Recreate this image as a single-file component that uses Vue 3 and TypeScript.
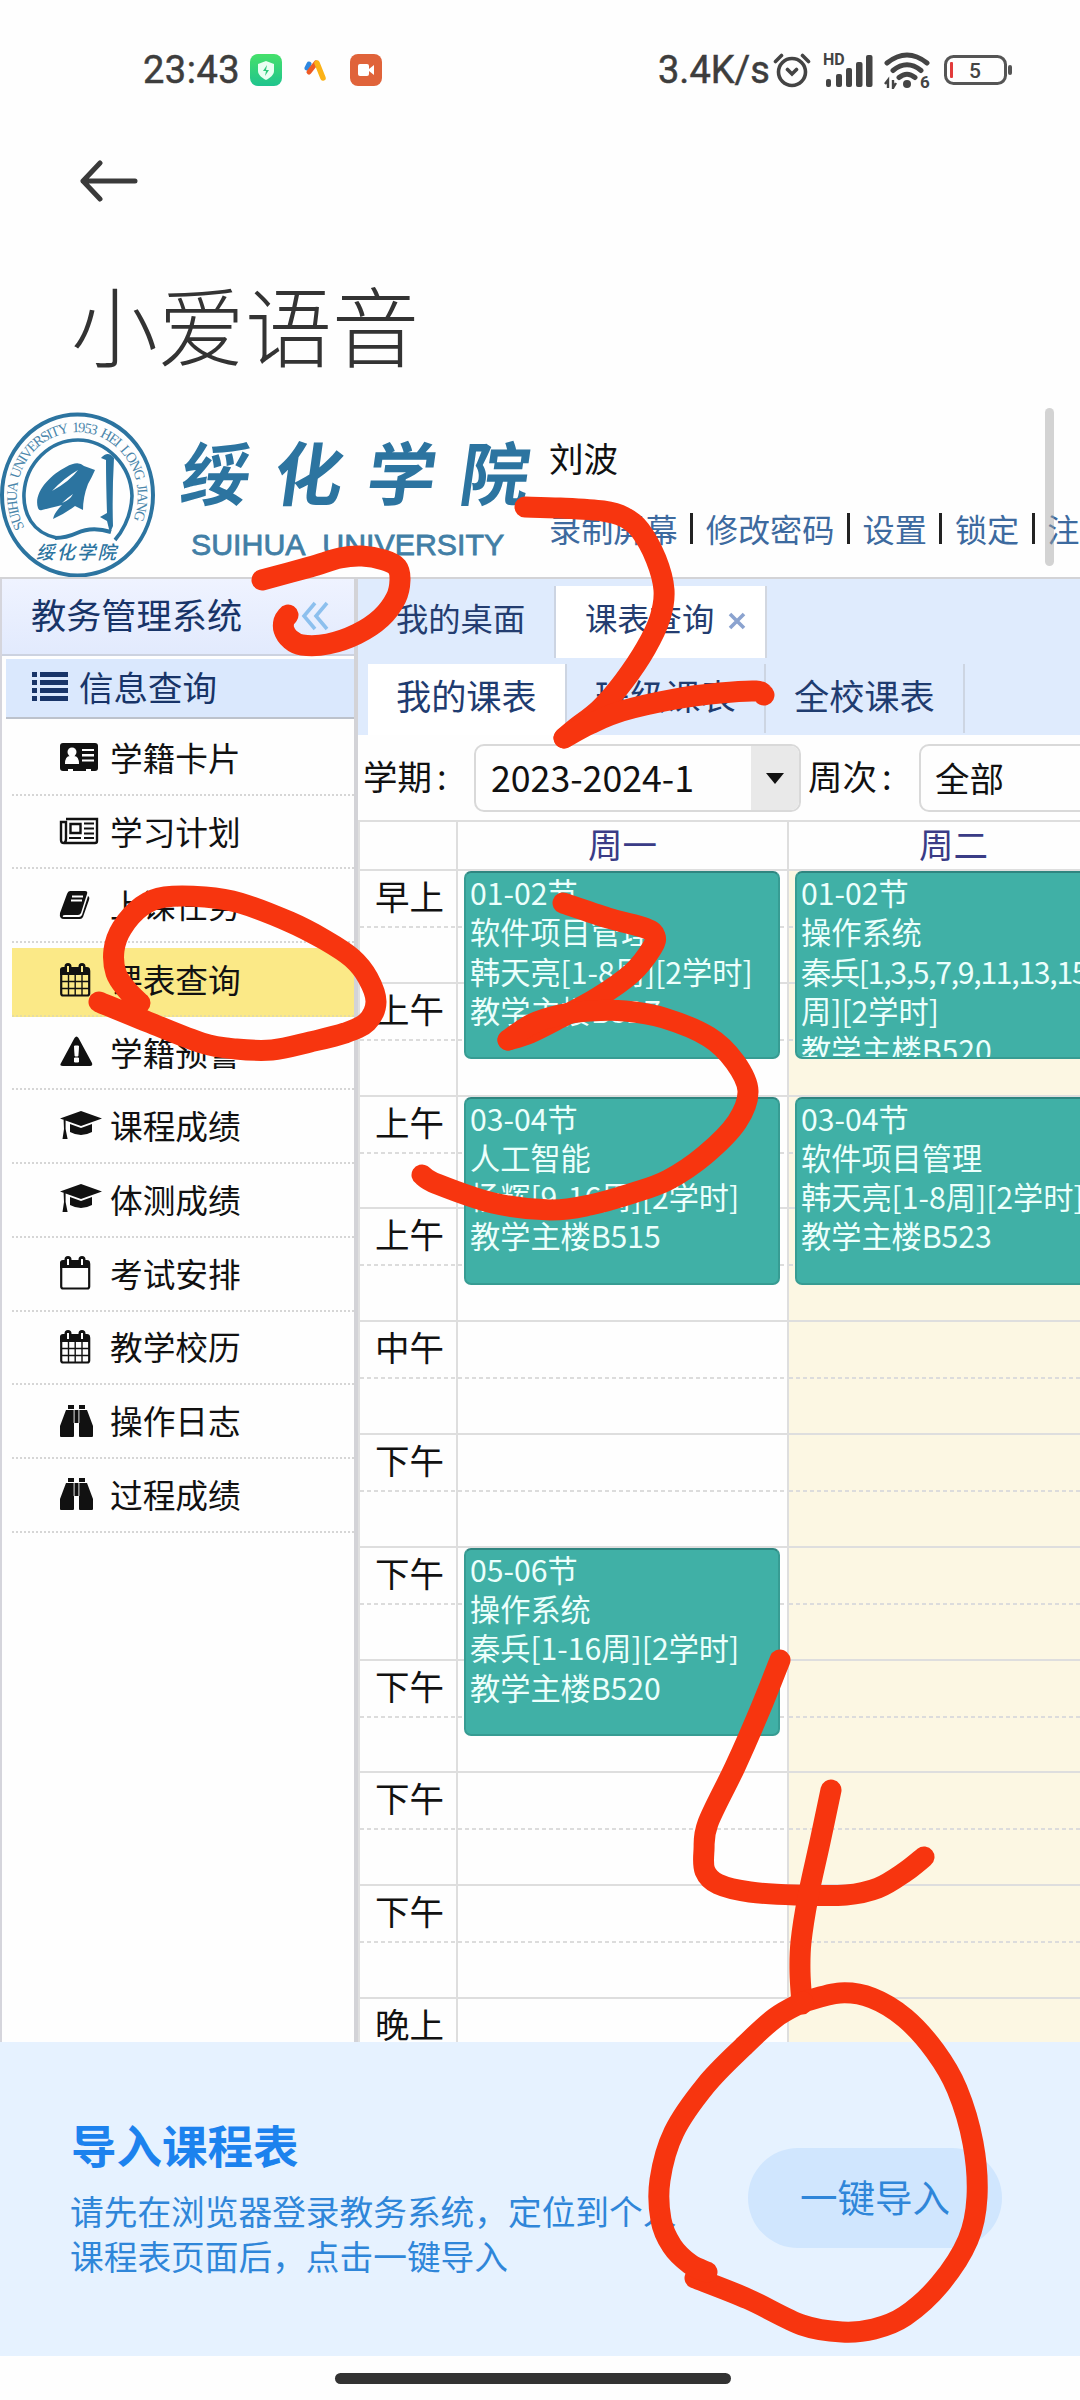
<script setup lang="ts">
interface MenuItem { icon: string; label: string; active?: boolean }
interface Lesson { col: number; row: number; lines: string[]; tight?: number }
type Pt = [number, number]

const menu: MenuItem[] = [
  { icon: 'card', label: '学籍卡片' },
  { icon: 'news', label: '学习计划' },
  { icon: 'book', label: '上课任务' },
  { icon: 'calendar', label: '课表查询', active: true },
  { icon: 'warn', label: '学籍预警' },
  { icon: 'cap', label: '课程成绩' },
  { icon: 'cap', label: '体测成绩' },
  { icon: 'calendar-o', label: '考试安排' },
  { icon: 'calendar', label: '教学校历' },
  { icon: 'bino', label: '操作日志' },
  { icon: 'bino', label: '过程成绩' },
]
const links = ['录制屏幕', '修改密码', '设置', '锁定', '注']
const slots = ['早上', '上午', '上午', '上午', '中午', '下午', '下午', '下午', '下午', '下午', '晚上']
const lessons: Lesson[] = [
  { col: 2, row: 2, lines: ['01-02节', '软件项目管理', '韩天亮[1-8周][2学时]', '教学主楼B527'] },
  { col: 2, row: 4, lines: ['03-04节', '人工智能', '杨辉[9-16周][2学时]', '教学主楼B515'] },
  { col: 2, row: 8, lines: ['05-06节', '操作系统', '秦兵[1-16周][2学时]', '教学主楼B520'] },
  { col: 3, row: 2, lines: ['01-02节', '操作系统', '秦兵[1,3,5,7,9,11,13,15', '周][2学时]', '教学主楼B520'], tight: 2 },
  { col: 3, row: 4, lines: ['03-04节', '软件项目管理', '韩天亮[1-8周][2学时]', '教学主楼B523'] },
]

// Freehand marker strokes, smoothed with a Catmull-Rom spline
const strokes: Pt[][] = [
  [[262, 580], [310, 567], [340, 558], [362, 556], [384, 560], [397, 567], [400, 580], [396, 598], [381, 618], [357, 634], [328, 644], [302, 645], [290, 639], [284, 630], [284, 621], [288, 615]],
  [[525, 507], [560, 508], [603, 511], [624, 517], [640, 530], [656, 559], [664, 590], [660, 618], [646, 648], [624, 681], [600, 709], [576, 728], [564, 738]],
  [[564, 738], [590, 724], [622, 711], [675, 699], [720, 693], [756, 691], [764, 695]],
  [[563, 903], [608, 918], [645, 928], [655, 936], [652, 948], [632, 973], [597, 998], [560, 1018], [530, 1033], [508, 1040]],
  [[508, 1040], [532, 1024], [560, 1015], [590, 1011], [625, 1011], [664, 1018], [709, 1037], [735, 1062], [748, 1091], [737, 1122], [705, 1155], [668, 1180], [633, 1193], [590, 1205], [550, 1210], [493, 1203], [437, 1184], [422, 1175]],
  [[99, 1002], [148, 1022], [202, 1043], [236, 1049], [272, 1050], [310, 1042], [345, 1033], [367, 1022], [376, 1002], [368, 978], [352, 958], [325, 940], [290, 922], [240, 903], [205, 897], [165, 897], [142, 906], [122, 928], [114, 950], [116, 973], [127, 990], [140, 1003]],
  [[780, 1660], [760, 1710], [735, 1767], [708, 1823], [704, 1850], [705, 1871], [718, 1884], [750, 1892], [795, 1895], [846, 1895], [878, 1888], [905, 1872], [924, 1857]],
  [[831, 1790], [820, 1842], [808, 1897], [801, 1942], [800, 1972], [802, 2004]],
  [[803, 2002], [840, 1993], [872, 1998], [905, 2018], [935, 2051], [957, 2089], [973, 2143], [977, 2197], [968, 2240], [940, 2284], [905, 2316], [874, 2329], [842, 2332], [802, 2325], [748, 2299], [695, 2278]],
  [[803, 2002], [775, 2018], [743, 2047], [706, 2085], [674, 2132], [660, 2180], [661, 2220], [672, 2246], [690, 2264], [707, 2272]],
]

function smooth(p: Pt[]): string {
  let d = `M${p[0][0]} ${p[0][1]}`
  for (let i = 0; i < p.length - 1; i++) {
    const a = p[Math.max(i - 1, 0)]
    const b = p[i]
    const c = p[i + 1]
    const e = p[Math.min(i + 2, p.length - 1)]
    d += `C${b[0] + (c[0] - a[0]) / 6} ${b[1] + (c[1] - a[1]) / 6} ${c[0] - (e[0] - b[0]) / 6} ${c[1] - (e[1] - b[1]) / 6} ${c[0]} ${c[1]}`
  }
  return d
}
</script>

<template>
  <div class="screen">
    <header class="status">
      <div class="status-left">
        <span class="clock">23:43</span>
        <svg class="app-ic" viewBox="0 0 32 32">
          <defs><linearGradient id="gr" x1="0" y1="0" x2="0" y2="1"><stop offset="0" stop-color="#45e06a" /><stop offset="1" stop-color="#1fc48e" /></linearGradient></defs>
          <rect width="32" height="32" rx="8" fill="url(#gr)" />
          <path d="M16 7l8 3v7c0 4-4 7-8 9-4-2-8-5-8-9v-7z" fill="#e9fff2" />
          <path d="M17 11l-4 6h3l-1 5 4-6h-3z" fill="#2fc97c" />
        </svg>
        <svg class="app-ic" viewBox="0 0 32 32">
          <path d="M7 14l2-4" stroke="#2d87e0" stroke-width="5" stroke-linecap="round" />
          <path d="M9 18L16 9" stroke="#ee5a24" stroke-width="5" stroke-linecap="round" />
          <path d="M17 9l6 15" stroke="#fbb217" stroke-width="5.500" stroke-linecap="round" />
        </svg>
        <svg class="app-ic" viewBox="0 0 32 32">
          <rect width="32" height="32" rx="8" fill="#e0633a" />
          <rect x="8" y="10" width="11" height="12" rx="2" fill="#fff" /><path d="M19 15l5-4v10l-5-4z" fill="#fff" />
        </svg>
      </div>
      <div class="status-right">
        <span class="speed">3.4K/s</span>
        <svg width="38" height="38" viewBox="0 0 38 38" fill="none" stroke="#444" stroke-width="3.600" stroke-linecap="round">
          <circle cx="19" cy="21" r="13.500" /><path d="M14.500 18.500L19 23l4.500-4.500M2.500 10.500l6-6M35.500 10.500l-6-6" />
        </svg>
        <svg width="50" height="38" viewBox="0 0 50 38" fill="#444">
          <text x="0" y="14" font-size="16" font-weight="700" font-family="Roboto, sans-serif">HD</text>
          <rect x="3" y="28" width="5" height="8" rx="2" /><rect x="13" y="23" width="6" height="13" rx="2" /><rect x="23" y="17" width="6" height="19" rx="2" /><rect x="33" y="11" width="6.500" height="25" rx="2" /><rect x="43" y="4" width="6.500" height="32" rx="2" />
        </svg>
        <svg class="wifi" width="48" height="38" viewBox="0 0 48 38">
          <g fill="none" stroke="#444" stroke-width="5" stroke-linecap="round"><path d="M3 12Q23-4 43 12M9 19.500Q23 8 37 19.500M15 26.500Q23 20 31 26.500" /></g>
          <circle cx="23" cy="33" r="4" fill="#444" />
          <path d="M4 37v-8l-3 4M9 29v8l3-5" fill="none" stroke="#444" stroke-width="2.400" />
          <text x="36" y="37" font-size="17" font-weight="700" fill="#444" font-family="Roboto, sans-serif">6</text>
        </svg>
        <svg width="70" height="32" viewBox="0 0 70 32">
          <rect x="1.500" y="2.500" width="60" height="27" rx="8" fill="none" stroke="#555" stroke-width="3" />
          <rect x="6" y="8" width="3" height="16" rx="1" fill="#e23b3b" /><rect x="64" y="11" width="4" height="10" rx="2" fill="#555" />
          <text x="25" y="23.500" font-size="21" font-weight="500" fill="#444" font-family="Roboto, sans-serif">5</text>
        </svg>
      </div>
    </header>

    <div class="nav">
      <svg width="58" height="42" viewBox="0 0 58 42" fill="none" stroke="#3a3a3a" stroke-width="5" stroke-linecap="round" stroke-linejoin="round"><path d="M20 3L3 21l17 18M3 21h52" /></svg>
    </div>
    <h1 class="title">小爱语音</h1>

    <section class="web">
      <div class="banner">
        <svg class="seal" viewBox="0 0 156 168">
          <defs><path id="ring" d="M24.500 118.500A60.500 64 0 1 1 133 112" /></defs>
          <g fill="none" stroke="#2c74a0"><ellipse cx="77.500" cy="86" rx="75.500" ry="80.500" stroke-width="4" /><path d="M57 129C32 124 23 104 24 84C26 54 50 31 78 31S131 56 132 87Q131 112 115 131" stroke-width="3.600" /></g>
          <text class="ring-text"><textPath href="#ring" textLength="252" lengthAdjust="spacing">SUIHUA UNIVERSITY 1953 HEI LONG JIANG</textPath></text>
          <path d="M38 99C33 84 50 66 66 58Q78 51 84 57L95 61Q92 68 88 75Q83 88 83 101L75 97Q66 104 53 110Q54 104 62 96Q50 99 42 101Q39 102 38 99Z" fill="#2c74a0" />
          <path d="M52 82Q64 69 78 61Q70 72 52 82ZM62 94Q67 89 73 85Q70 91 62 94Z" fill="#fff" />
          <path d="M101 49Q108 41 114 49Q112 85 113 117L110 124L107 112L100 108L107 104Q106 75 106 51Z" fill="#2c74a0" />
          <path d="M55 129Q66 129 77 124Q92 117 111 123" fill="none" stroke="#2c74a0" stroke-width="4" />
          <text x="36" y="150" class="seal-name">绥化学院</text>
        </svg>
        <div class="brand">
          <div class="brand-cn"><span>绥</span><span>化</span><span>学</span><span>院</span></div>
          <div class="brand-en">SUIHUA&nbsp; UNIVERSITY</div>
        </div>
        <div class="account">
          <div class="user">刘波</div>
          <nav class="links">
            <template v-for="(l, i) in links" :key="l"><i v-if="i" class="bar"></i><a>{{ l }}</a></template>
          </nav>
        </div>
        <i class="scrollbar"></i>
      </div>

      <div class="body">
        <aside class="side">
          <div class="side-head">
            <span>教务管理系统</span>
            <svg width="28" height="30" viewBox="0 0 28 30" fill="none" stroke="#8dc0ee" stroke-width="3.600"><path d="M14 2L3 15l11 13M26 2L15 15l11 13" /></svg>
          </div>
          <div class="side-group">
            <svg width="36" height="30" viewBox="0 0 36 30" fill="#183468"><path d="M0 1h5v5H0zM0 9h5v5H0zM0 17h5v5H0zM0 25h5v5H0zM8 1h28v5H8zM8 9h28v5H8zM8 17h28v5H8zM8 25h28v5H8z" /></svg>
            <span>信息查询</span>
          </div>
          <div v-for="m in menu" :key="m.label" class="item" :class="{ active: m.active }">
            <svg class="mi" viewBox="0 0 42 34">
              <g v-if="m.icon === 'card'"><rect x="0" y="3" width="38" height="28" rx="3" /><g fill="#fff"><circle cx="12" cy="12" r="4.500" /><path d="M5 24q0-8 5-8h4q5 0 5 8zM22 9h12v2H22zM22 14h12v2.500H22zM22 19.500h12v2H22zM8 29h5v2H8zM26 29h5v2h-5z" /></g></g>
              <g v-else-if="m.icon === 'news'" fill="none" stroke="#111" stroke-width="2.400"><path d="M6 5h31v22q0 2-2 2H4q-3 0-3-3V8h5v17q0 3-2 4" /><path d="M10.500 10h10v9h-10z" /><path d="M9 24h12M24 9.500h10M24 14.500h10M24 19.500h10M24 24h10" stroke-width="2" /></g>
              <g v-else-if="m.icon === 'book'"><path d="M10 3h15q3 0 2 3l-6 19q-1 2-3 2H5q-3 0-2 2h16q2 0 3-2l6-19q2 1 1 4l-6 17q-1 2-3 2H4q-5 0-4-6L7 6q1-3 3-3z" /><path d="M12 8.500h11M11 12.500h11" stroke="#fff" stroke-width="1.800" /></g>
              <g v-else-if="m.icon === 'calendar' || m.icon === 'calendar-o'"><path d="M0 12V7q0-3 3-3h24q3 0 3 3v5z" /><rect x="1.200" y="6" width="28" height="26.500" rx="2" fill="none" stroke="#111" stroke-width="2.200" /><g :stroke="m.active ? '#fbe987' : '#fff'" stroke-width="2"><rect x="5.500" y="1" width="5" height="9" rx="2.500" fill="#111" stroke="#111" /><rect x="19.500" y="1" width="5" height="9" rx="2.500" fill="#111" stroke="#111" /><path d="M8 3v6M22 3v6" /></g><path v-if="m.icon === 'calendar'" d="M1 18.500h28M1 25.500h28M8.500 12v20M15.200 12v20M22 12v20" stroke="#111" stroke-width="1.400" /></g>
              <g v-else-if="m.icon === 'warn'"><path d="M14.500 3q2-3 4 0L32 28q1 3-2 3H3q-4 0-2-3z" /><path d="M14.500 11h4l-.6 10h-2.800zM14.500 23h4v4h-4z" fill="#fff" stroke="#fff" /></g>
              <g v-else-if="m.icon === 'cap'"><path d="M0 9.500L21 2l21 7.500L21 17zM10 15l11 4 11-4v8q-11 6-22 0zM3.600 11h2v9l2 10H2.500l1.500-10z" /></g>
              <g v-else><path d="M8 1h6v4H8zM19 1h6v4h-6zM6 6h8v26q0 1-1 1H1q-1 0-1-1V22zM27 6h-8v26q0 1 1 1h12q1 0 1-1V22zM14.500 6h4v13h-4z" /><path d="M13.800 6v13M19.200 6v13" stroke="#aaa" stroke-width=".8" /></g>
            </svg>
            <span>{{ m.label }}</span>
          </div>
        </aside>

        <main class="main">
          <div class="tabs">
            <div class="tab first">我的桌面</div>
            <div class="tab on">课表查询<svg width="18" height="18" viewBox="0 0 18 18" stroke="#8ba3cf" stroke-width="3.600"><path d="M2 2l14 14M16 2L2 16" /></svg></div>
          </div>
          <div class="subtabs">
            <div class="sub on">我的课表</div>
            <div class="sub">班级课表</div>
            <div class="sub">全校课表</div>
          </div>
          <div class="filters">
            <label class="term">学期<b>:</b></label>
            <div class="select"><span>2023-2024-1</span><i class="drop"><svg width="18" height="11" viewBox="0 0 18 11"><path d="M0 0h18L9 11z" fill="#111" /></svg></i></div>
            <label class="week">周次<b>:</b></label>
            <div class="select week-box"><span>全部</span></div>
          </div>
          <div class="grid">
            <div class="head c1"></div>
            <div class="head c2">周一</div>
            <div class="head c3">周二</div>
            <template v-for="(s, i) in slots" :key="i">
              <div class="cell time" :style="{ gridRow: i + 2, gridColumn: 1 }">{{ s }}</div>
              <div class="cell" :style="{ gridRow: i + 2, gridColumn: 2 }"></div>
              <div class="cell today" :style="{ gridRow: i + 2, gridColumn: 3 }"></div>
            </template>
            <div v-for="(e, i) in lessons" :key="'e' + i" class="lesson" :style="{ gridRow: `${e.row} / span 2`, gridColumn: e.col }">
              <div v-for="(t, j) in e.lines" :key="j" :class="{ tight: e.tight === j }">{{ t }}</div>
            </div>
          </div>
        </main>
      </div>
    </section>

    <section class="import">
      <div class="import-text">
        <h2>导入课程表</h2>
        <p>请先在浏览器登录教务系统，定位到个人<br />课程表页面后，点击一键导入</p>
      </div>
      <button class="import-btn">一键导入</button>
    </section>
    <footer class="gesture"><i></i></footer>

    <svg class="marks" viewBox="0 0 1080 2400"><path v-for="(s, i) in strokes" :key="i" :d="smooth(s)" /></svg>
  </div>
</template>

<style>
body { margin: 0; background: #fff; }
</style>

<style scoped>
* { box-sizing: border-box; }
.screen { position: relative; display: flex; flex-direction: column; width: 1080px; height: 2400px; overflow: hidden; background: #fefefe; color: #111; font-family: "Noto Sans CJK SC", sans-serif; white-space: nowrap; }
i { font-style: normal; }
.status { display: flex; justify-content: space-between; height: 140px; padding: 0 66px 0 143px; color: #3d3d3d; font: 400 38px/140px Roboto, sans-serif; -webkit-text-stroke: .5px #3d3d3d; }
.status svg { -webkit-text-stroke: 0; }
.status-left, .status-right { display: flex; align-items: center; }
.clock { width: 107px; letter-spacing: .5px; }
.app-ic { width: 32px; height: 32px; margin-right: 18px; }
.status-right { gap: 11px; }
.speed { flex: none; width: 114px; margin-right: -7px; }
.status-right .speed + svg { margin-right: 1px; margin-left: -3px; }
.wifi { margin-right: 1px; }
.status-right svg { flex: none; }
.nav { display: flex; align-items: center; height: 82px; padding-left: 80px; }
.title { height: 182px; margin: 0; padding-left: 71px; font-size: 87px; font-weight: 300; line-height: 202px; color: #333; }
.web { display: flex; flex-direction: column; height: 1638px; overflow: hidden; }
.banner { position: relative; display: flex; flex: none; height: 175px; padding-top: 5px; border-bottom: 2px solid #d3d3d6; }
.seal { flex: none; width: 156px; height: 168px; }
.ring-text { font: 400 14.500px "Liberation Serif", serif; fill: #4b86ab; word-spacing: 3px; }
.seal-name { font: italic 500 18.500px "Noto Sans CJK SC", sans-serif; letter-spacing: 2px; fill: #2c74a0; }
.brand { display: flex; flex: none; flex-direction: column; width: 393px; }
.brand-cn { display: flex; gap: 24px; height: 114px; padding-left: 27px; color: #2c74a0; font-size: 69px; font-weight: 700; line-height: 122px; transform: skewX(-8deg); }
.brand-en { padding-left: 35px; color: #427fa6; font: 400 30.300px/44px "Liberation Sans", Arial, sans-serif; -webkit-text-stroke: .8px #427fa6; }
.account { display: flex; flex: none; flex-direction: column; }
.user { height: 86px; font-size: 34.500px; line-height: 96px; }
.links { display: flex; align-items: center; height: 66px; font-size: 32.200px; color: #3d6a9f; }
.links a { line-height: 50px; }
.bar { flex: none; width: 3px; height: 31px; margin: 0 12.500px; background: #222; }
.scrollbar { position: absolute; top: 4px; left: 1045px; width: 9px; height: 158px; border-radius: 5px; background: rgba(160, 160, 160, .45); }
.body { display: flex; flex: 1; min-height: 0; }
.side { flex: none; width: 358px; border-left: 2px solid #d5d5dc; border-right: 4px solid #d3d3d7; overflow: hidden; }
.side-head { display: flex; justify-content: space-between; align-items: center; height: 77px; padding: 0 25px 6px 29px; border-bottom: 2px solid #ccd2e0; background: linear-gradient(#eff3ff, #e2eafd); color: #183468; font-size: 35.200px; }
.side-head svg { margin-top: 4px; }
.side-group { display: flex; align-items: center; gap: 11px; height: 60px; margin: 3px 0 3px 4px; padding: 0 0 4px 26px; border-bottom: 2px solid #bcc2cc; background: #dae8fd; color: #183468; font-size: 34.500px; }
.item { display: flex; align-items: center; height: 73.700px; margin-left: 10px; padding: 0 0 3px 48px; border-bottom: 2px dotted #d6d6d6; font-size: 32.700px; }
.mi { width: 42px; height: 34px; margin: 2px 8px 0 0; fill: #111; overflow: visible; }
.item.active { height: 68.700px; margin-top: 5px; padding-bottom: 5px; background: #fbe987; border-bottom-color: #e6dda0; }
.main { display: flex; flex-direction: column; flex: none; width: 762px; }
.main > * { flex: none; }
.tabs { display: flex; height: 85px; padding: 7px 0 0 10px; background: #dfebfd; color: #243d70; font-size: 32.300px; }
.tab { height: 72px; line-height: 62px; }
.tab.first { width: 188px; padding-left: 28px; border-right: 2px solid #ccd4e2; }
.tab.on { display: flex; align-items: center; gap: 14px; width: 211px; padding: 0 0 10px 29px; background: #fff; border-right: 2px solid #d2d7e0; }
.tab.on svg { margin-top: 8px; }
.subtabs { display: flex; height: 71px; padding-left: 10px; background: #dfebfd; color: #1f3c70; font-size: 35.200px; line-height: 61px; }
.sub { width: 199px; height: 69px; padding-left: 28px; border-right: 2px solid #cdd5e2; }
.sub.on { height: 71px; background: #fff; }
.filters { display: flex; height: 85px; padding: 9px 0 0 5px; font-size: 34.500px; line-height: 62px; }
.filters > * { flex: none; }
.filters b { margin-left: 5px; font-weight: 400; }
.term { width: 111px; }
.week { width: 111px; }
.select { display: flex; justify-content: space-between; width: 327px; height: 68px; margin-right: 7px; padding-left: 15px; border: 2px solid #d9d9d9; border-radius: 10px; font-size: 35.700px; line-height: 62px; overflow: hidden; }
.week-box { width: 340px; padding-left: 14px; font-size: 34.500px; }
.drop { display: flex; align-items: center; justify-content: center; width: 48px; background: #e9e9e9; }
.grid { display: grid; grid-template-columns: 98px 331px 331px; grid-template-rows: 49px repeat(11, 112.8px); border-top: 2px solid #dedede; border-left: 2px solid #e0e0e0; }
.head { grid-row: 1; border-right: 2px solid #dedede; border-bottom: 2px solid #dedede; color: #3a3c86; font-size: 34.500px; line-height: 42px; text-align: center; }
.c1 { grid-column: 1; }
.c2 { grid-column: 2; }
.c3 { grid-column: 3; }
.cell { border-right: 2px solid #dedede; border-bottom: 2px solid #dedede; background: repeating-linear-gradient(90deg, #dcdcdc 0 4px, transparent 4px 7px) 0 55px / 100% 2px no-repeat; }
.today { background-color: #fcf7e3; }
.time { padding-left: 15px; font-size: 34.500px; line-height: 49px; }
.lesson { z-index: 1; align-self: start; width: 316px; height: 188px; margin: 0 0 0 6px; padding: 0 4px; overflow: hidden; border: 2px solid #379c93; border-top-color: #2f8580; border-radius: 7px; background: #40b0a6; color: #ecfffc; font-size: 30.200px; line-height: 39.300px; }
.tight { letter-spacing: -1.300px; }
.import { display: flex; flex: none; justify-content: space-between; height: 314px; padding: 72px 78px 0 71px; background: #e6f2ff; color: #2f86d9; }
.import-text { width: 640px; }
.import h2 { margin: 0; color: #1c82ee; font-size: 45.500px; font-weight: 700; line-height: 60px; }
.import p { margin: 14px 0 0 -1px; font-size: 33.700px; line-height: 45px; }
.import-btn { width: 254px; height: 100px; margin-top: 34px; padding: 0 0 5px; border: 0; border-radius: 50px; background: #d0e6fe; color: #2f86d9; font: 400 37.500px/92px "Noto Sans CJK SC", sans-serif; }
.gesture { display: flex; justify-content: center; height: 44px; padding: 17px 15px 0 0; }
.gesture i { width: 396px; height: 11px; border-radius: 6px; background: #323232; }
.marks { position: absolute; inset: 0; z-index: 5; width: 1080px; height: 2400px; fill: none; stroke: #f7350f; stroke-width: 21px; stroke-linecap: round; stroke-linejoin: round; pointer-events: none; }
</style>
